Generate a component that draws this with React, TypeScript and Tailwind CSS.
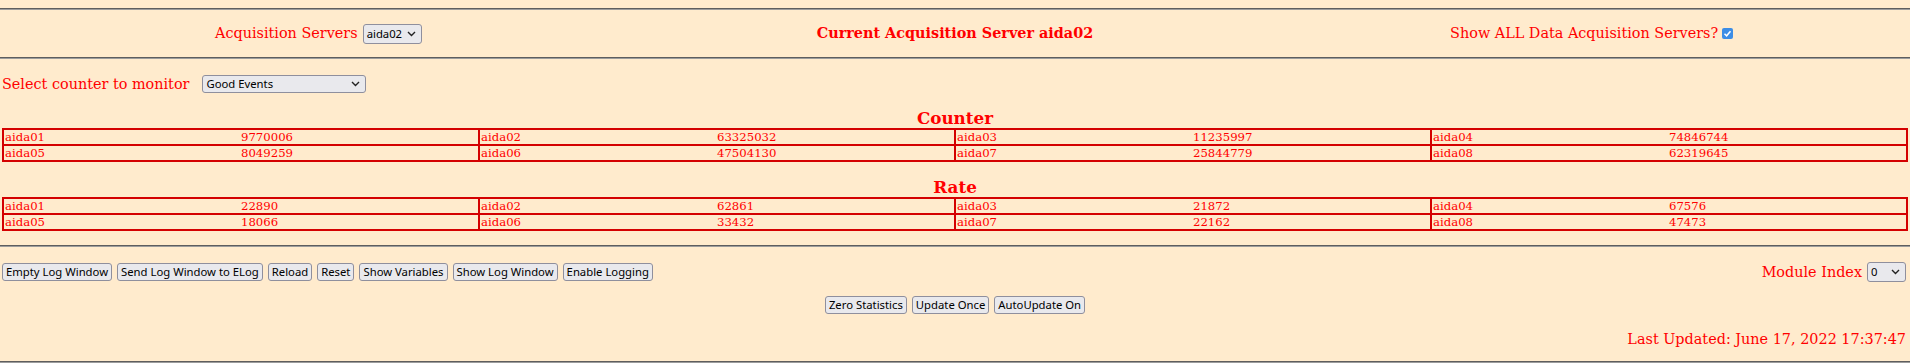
import React from 'react';

type Pair = { name: string; value: string };

const counterRows: Pair[][] = [
  [
    { name: 'aida01', value: '9770006' },
    { name: 'aida02', value: '63325032' },
    { name: 'aida03', value: '11235997' },
    { name: 'aida04', value: '74846744' },
  ],
  [
    { name: 'aida05', value: '8049259' },
    { name: 'aida06', value: '47504130' },
    { name: 'aida07', value: '25844779' },
    { name: 'aida08', value: '62319645' },
  ],
];

const rateRows: Pair[][] = [
  [
    { name: 'aida01', value: '22890' },
    { name: 'aida02', value: '62861' },
    { name: 'aida03', value: '21872' },
    { name: 'aida04', value: '67576' },
  ],
  [
    { name: 'aida05', value: '18066' },
    { name: 'aida06', value: '33432' },
    { name: 'aida07', value: '22162' },
    { name: 'aida08', value: '47473' },
  ],
];

const leftButtons = [
  'Empty Log Window',
  'Send Log Window to ELog',
  'Reload',
  'Reset',
  'Show Variables',
  'Show Log Window',
  'Enable Logging',
];

const Rule: React.FC<{ className?: string }> = ({ className = '' }) => (
  <div className={`h-[2px] border-t border-t-[#5e5e5e] border-b border-b-[#9c9c9c] ${className}`} />
);

const Chevron = () => (
  <svg width="9" height="6" viewBox="0 0 9 6" className="shrink-0">
    <polyline points="1,1 4.5,4.5 8,1" fill="none" stroke="#222" strokeWidth="1.4" />
  </svg>
);

const FakeSelect: React.FC<{ value: string; className?: string }> = ({ value, className = '' }) => (
  <div
    className={`flex items-center justify-between pl-[3px] pr-[5px] border border-[#8f8f9d] bg-[#e9e9ed] rounded-[3px] font-['Noto_Sans',sans-serif] text-[11.3px] leading-none text-black ${className}`}
  >
    <span>{value}</span>
    <Chevron />
  </div>
);

const Btn: React.FC<{ label: string }> = ({ label }) => (
  <button className="h-[18px] px-[3px] border border-[#8f8f9d] bg-[#e9e9ed] rounded-[3px] font-['Noto_Sans',sans-serif] text-[11.3px] leading-none text-black whitespace-nowrap">
    {label}
  </button>
);

const Checkbox = () => (
  <div className="w-[11px] h-[11px] rounded-[2px] bg-[#3c8de6] flex items-center justify-center">
    <svg width="9" height="9" viewBox="0 0 9 9">
      <polyline points="1.5,4.8 3.6,6.8 7.5,2.2" fill="none" stroke="#fff" strokeWidth="1.5" />
    </svg>
  </div>
);

const DataTable: React.FC<{ rows: Pair[][] }> = ({ rows }) => (
  <div className="mx-[2px] grid grid-cols-4 border-t-2 border-l-2 border-[#d40000] text-[11.7px]">
    {rows.flat().map((p, i) => (
      <div key={i} className="grid grid-cols-2 h-[16px] leading-[14px] border-r-2 border-b-2 border-[#d40000]">
        <span className="pl-[1px]">{p.name}</span>
        <span>{p.value}</span>
      </div>
    ))}
  </div>
);

export default function App() {
  return (
    <div className="min-h-screen bg-[#ffebcd] text-[#ff0000] font-['DejaVu_Serif',serif] text-[14.4px] leading-[1.15] pt-[8px]">
      <Rule />

      {/* Server header */}
      <div className="grid grid-cols-3 h-[47px] items-center">
        <div className="flex items-center justify-center gap-[5px]">
          <span>Acquisition Servers</span>
          <FakeSelect value="aida02" className="w-[59px] h-[20px]" />
        </div>
        <div className="text-center font-bold">Current Acquisition Server aida02</div>
        <div className="flex items-center justify-center gap-[4px]">
          <span>Show ALL Data Acquisition Servers?</span>
          <Checkbox />
        </div>
      </div>

      <Rule />

      {/* Counter selector */}
      <div className="flex items-center h-[18px] mt-[16px] pl-[2px]">
        <span>Select counter to monitor</span>
        <FakeSelect value="Good Events" className="ml-[13px] w-[164px] h-[18px]" />
      </div>

      <h3 className="mt-[16px] h-[19px] leading-[19px] text-center font-bold text-[16.8px]">Counter</h3>
      <DataTable rows={counterRows} />

      <h3 className="mt-[16px] h-[19px] leading-[19px] text-center font-bold text-[16.8px]">Rate</h3>
      <DataTable rows={rateRows} />

      <Rule className="mt-[14px]" />

      {/* Controls */}
      <div className="flex items-center justify-between h-[18px] mt-[16px] pl-[2px] pr-[4px]">
        <div className="flex items-center gap-[5px]">
          {leftButtons.map((b) => (
            <Btn key={b} label={b} />
          ))}
        </div>
        <div className="flex items-center gap-[5px]">
          <span>Module Index</span>
          <FakeSelect value="0" className="w-[39px] h-[20px]" />
        </div>
      </div>

      <div className="flex items-center justify-center gap-[5px] h-[18px] mt-[15px]">
        <Btn label="Zero Statistics" />
        <Btn label="Update Once" />
        <Btn label="AutoUpdate On" />
      </div>

      <div className="h-[18px] leading-[18px] mt-[16px] pr-[4px] text-right">
        Last Updated: June 17, 2022 17:37:47
      </div>

      <Rule className="mt-[13px]" />
    </div>
  );
}
